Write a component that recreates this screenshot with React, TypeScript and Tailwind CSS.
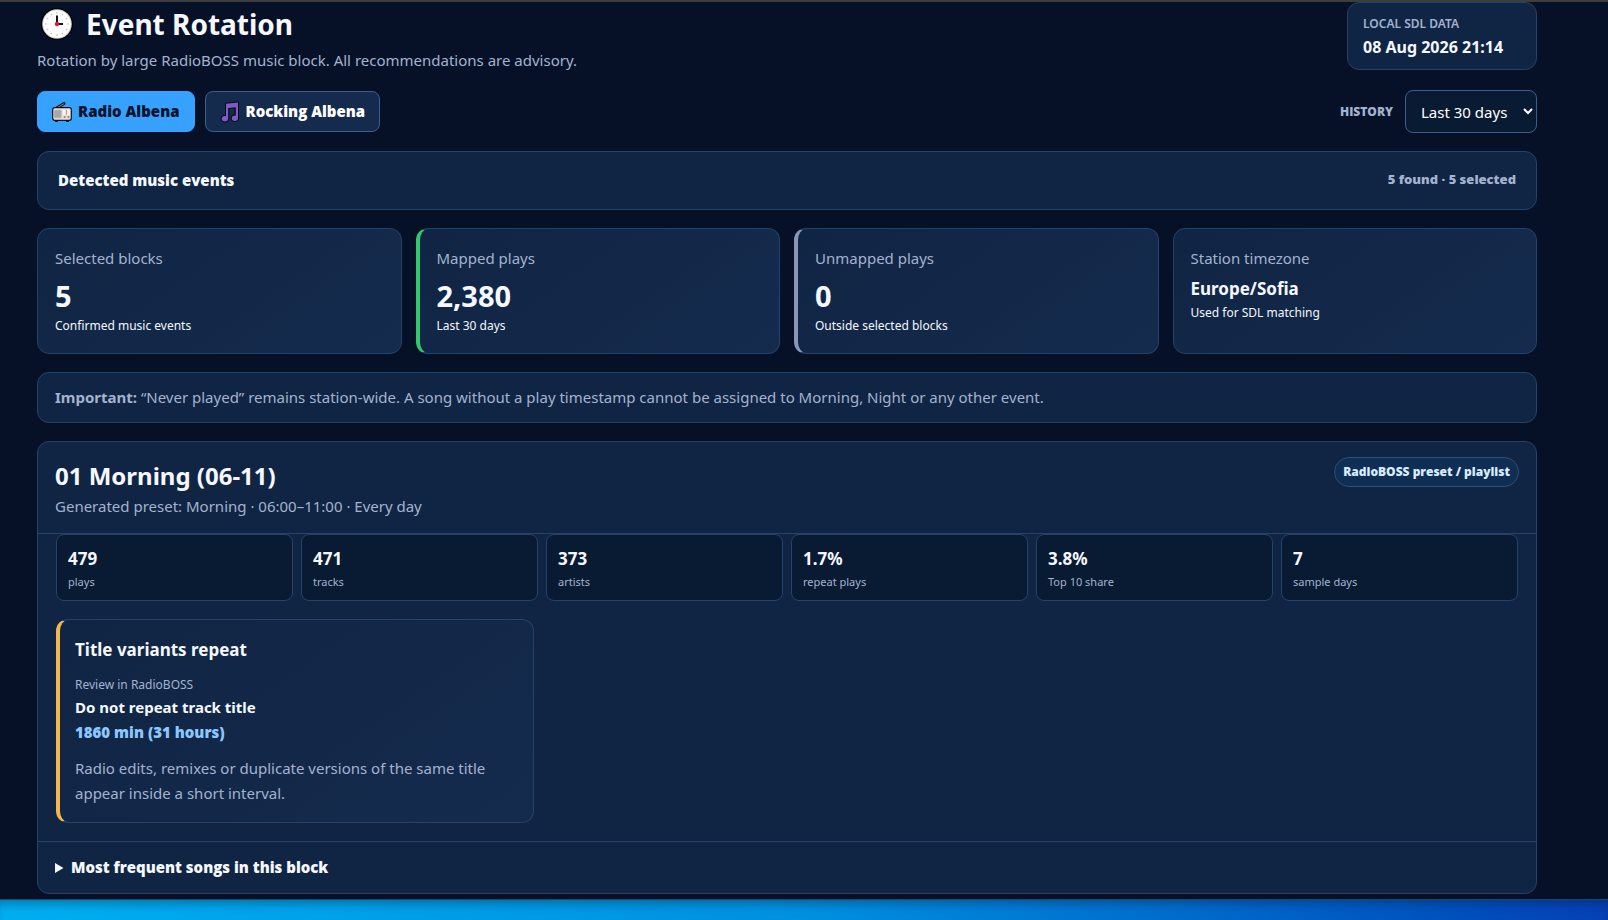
import { useState } from 'react'
import type { ReactNode } from 'react'

type Station = 'albena' | 'rocking'

interface StatCard {
  label: string
  value: string
  note: string
  accent?: string
  small?: boolean
}

const STATS: StatCard[] = [
  { label: 'Selected blocks', value: '5', note: 'Confirmed music events' },
  { label: 'Mapped plays', value: '2,380', note: 'Last 30 days', accent: 'border-l-4 border-l-[#32c671]' },
  { label: 'Unmapped plays', value: '0', note: 'Outside selected blocks', accent: 'border-l-4 border-l-[#8998b0]' },
  { label: 'Station timezone', value: 'Europe/Sofia', note: 'Used for SDL matching', small: true },
]

const METRICS = [
  { value: '479', label: 'plays' },
  { value: '471', label: 'tracks' },
  { value: '373', label: 'artists' },
  { value: '1.7%', label: 'repeat plays' },
  { value: '3.8%', label: 'Top 10 share' },
  { value: '7', label: 'sample days' },
]

// Open Sans goes up to a real 800 weight, Noto Sans is used for the rest
const HEAVY = "font-['Open_Sans','Noto_Sans',sans-serif] font-extrabold "

function ClockIcon() {
  const dots = Array.from({ length: 12 }, (_, i) => (i * Math.PI) / 6)
  return (
    <svg width="32" height="32" viewBox="0 0 32 32" aria-hidden="true" className="shrink-0">
      <circle cx="16" cy="16" r="16" fill="#000" />
      <circle cx="16" cy="16" r="14.8" fill="#cfcfcf" />
      <circle cx="16" cy="16" r="13.8" fill="#fff" />
      {dots.map((a) => (
        <circle key={a} cx={16 + 11 * Math.sin(a)} cy={16 - 11 * Math.cos(a)} r="0.8" fill="#b9b9b9" />
      ))}
      <path d="M16 16V7.4M16 16h6" stroke="#111" strokeWidth="2" fill="none" />
      <circle cx="16" cy="16" r="2.2" fill="#f4122b" />
    </svg>
  )
}

function RadioIcon() {
  return (
    <svg width="20" height="22" viewBox="0 0 20 22" aria-hidden="true" className="shrink-0">
      <path d="M4 7.5 12 2.5" stroke="#111" strokeWidth="3" strokeLinecap="round" />
      <path d="M4.5 7.2 11.9 2.7" stroke="#8d8d8d" strokeWidth="1" />
      <rect x="3" y="18" width="3" height="3" rx="0.8" fill="#111" />
      <rect x="14" y="18" width="3" height="3" rx="0.8" fill="#111" />
      <rect x="0.7" y="6.7" width="18.6" height="12.6" rx="2" fill="#e4e2e0" stroke="#111" strokeWidth="1.2" />
      <rect x="2.2" y="8.8" width="7.2" height="8.4" fill="#b4b2b1" />
      <path d="M2.2 11h7.2M2.2 13h7.2M2.2 15h7.2" stroke="#8f8d8c" strokeWidth="0.6" />
      <rect x="11" y="8.8" width="7" height="5" fill="#f8f6f3" />
      <path d="M14.4 8.8v5" stroke="#f2793a" strokeWidth="1" />
      <circle cx="12.7" cy="16" r="1.1" fill="#8a8a8a" />
      <circle cx="16.4" cy="16" r="1.1" fill="#8a8a8a" />
    </svg>
  )
}

function NotesIcon() {
  return (
    <svg width="20" height="22" viewBox="0 0 20 22" aria-hidden="true" className="shrink-0">
      <g stroke="#0b0b14" strokeWidth="2" strokeLinejoin="round">
        <path d="M6 2.8 18 1.6v15.2h-2.6V6.2L8.4 7v10.6H6z" />
        <ellipse cx="4.9" cy="17.8" rx="3.4" ry="2.9" />
        <ellipse cx="14.9" cy="17.2" rx="3.3" ry="2.9" />
      </g>
      <g fill="#7a5bc7">
        <path d="M6 2.8 18 1.6v15.2h-2.2V6.2L8.2 7v10.6H6z" />
        <ellipse cx="4.9" cy="17.8" rx="3.2" ry="2.7" />
        <ellipse cx="14.9" cy="17.2" rx="3.1" ry="2.7" />
      </g>
    </svg>
  )
}

function StationTab({ active, onClick, children }: { active: boolean; onClick: () => void; children: ReactNode }) {
  return (
    <button
      type="button"
      aria-pressed={active}
      onClick={onClick}
      className={
        HEAVY +
        'flex items-center gap-[6px] rounded-lg border px-[14px] py-[7px] ' +
        (active ? 'border-[#37a1ff] bg-[#37a1ff] text-[#04122a]' : 'border-[#3a5f8f] bg-[#152b4e] text-white')
      }
    >
      {children}
    </button>
  )
}

export default function App() {
  const [station, setStation] = useState<Station>('albena')
  const [history, setHistory] = useState('30')

  return (
    <div className="flex min-h-screen flex-col border-t-2 border-[#3d3d3f] bg-[#061128] font-['Noto_Sans','Open_Sans',sans-serif] text-[15px] leading-[25px] text-[#f5f8ff]">
      <main className="flex flex-1 flex-col pr-[71px] pb-[5px] pl-[37px]">
        <header className="flex items-start justify-between">
          <div>
            <h1 className="flex items-center gap-[13px] pt-1 pl-1 text-[28px] leading-9 font-bold">
              <ClockIcon />
              Event Rotation
            </h1>
            <p className="mt-[6px] text-[#a3b3cf]">
              Rotation by large RadioBOSS music block. All recommendations are advisory.
            </p>
          </div>
          <div className="min-w-[190px] rounded-xl border border-[#254369] bg-[#102543] px-[15px] py-[9px]">
            <div className="text-xs leading-[23px] font-semibold text-[#a3b3cf] uppercase">Local SDL data</div>
            <div className="text-base leading-[25px] font-bold">08 Aug 2026 21:14</div>
          </div>
        </header>

        <div className="mt-[17px] flex items-center justify-between">
          <div className="flex gap-[10px]">
            <StationTab active={station === 'albena'} onClick={() => setStation('albena')}>
              <RadioIcon />
              Radio Albena
            </StationTab>
            <StationTab active={station === 'rocking'} onClick={() => setStation('rocking')}>
              <NotesIcon />
              Rocking Albena
            </StationTab>
          </div>
          <div className="flex items-center gap-3">
            <label htmlFor="history" className={HEAVY + 'text-xs text-[#a3b3cf] uppercase'}>
              History
            </label>
            <select
              id="history"
              value={history}
              onChange={(e) => setHistory(e.target.value)}
              className="h-[43px] w-[132px] rounded-lg border border-[#3a5f8f] bg-[#091a33] pl-[11px] text-white"
            >
              <option value="7">Last 7 days</option>
              <option value="30">Last 30 days</option>
              <option value="90">Last 90 days</option>
            </select>
          </div>
        </div>

        <section className="mt-[18px] flex items-start justify-between rounded-xl border border-[#254369] bg-[#102543] px-5 pt-[15px] pb-4">
          <h2 className={HEAVY + 'pt-px'}>Detected music events</h2>
          <span className={HEAVY + 'text-[13px] text-[#a3b3cf]'}>5 found · 5 selected</span>
        </section>

        <section className="mt-[18px] grid grid-cols-4 gap-[14px]">
          {STATS.map((s) => (
            <div
              key={s.label}
              className={
                'rounded-xl border border-[#254369] bg-linear-145 from-[#102543] to-[#152b4e] px-[17px] py-[17px] ' +
                (s.accent ?? '')
              }
            >
              <div className="text-[#a3b3cf]">{s.label}</div>
              <div className={s.small ? 'mt-1 text-[17px] leading-7 font-bold' : 'mt-1 text-[29px] leading-[41px] font-bold'}>
                {s.value}
              </div>
              <div className="text-xs leading-5">{s.note}</div>
            </div>
          ))}
        </section>

        <p className="mt-[18px] rounded-xl border border-[#254369] bg-[#102543] px-[17px] py-3 text-[#a3b3cf]">
          <strong className="font-bold">Important:</strong> “Never played” remains station-wide. A song without a play
          timestamp cannot be assigned to Morning, Night or any other event.
        </p>

        <article className="mt-[18px] rounded-xl border border-[#254369] bg-[#102543]">
          <div className="flex items-start justify-between border-b border-[#254369] px-[17px] pt-[15px] pb-[14px]">
            <div>
              <h2 className="text-2xl leading-[37px] font-bold">01 Morning (06-11)</h2>
              <p className="text-[#a3b3cf]">Generated preset: Morning · 06:00–11:00 · Every day</p>
            </div>
            <span className={HEAVY + 'rounded-full border border-[#2b4f7e] bg-[#102d53] px-2 py-1 text-xs leading-5 text-[#d8ebff]'}>
              RadioBOSS preset / playlist
            </span>
          </div>

          <div className="grid grid-cols-6 gap-2 px-[18px]">
            {METRICS.map((m) => (
              <div key={m.label} className="rounded-lg border border-[#254369] bg-[#091a33] px-[11px] py-[10px]">
                <div className="text-[17px] leading-7 font-bold">{m.value}</div>
                <div className="text-[11px] leading-[17px] text-[#a3b3cf]">{m.label}</div>
              </div>
            ))}
          </div>

          <div className="grid grid-cols-3 gap-[14px] p-[18px]">
            <div className="rounded-xl border border-l-4 border-[#254369] border-l-[#f5b64d] bg-linear-145 from-[#102543] to-[#152b4e] px-[15px] py-4">
              <h3 className="text-[17px] leading-7 font-bold">Title variants repeat</h3>
              <p className="mt-[10px] text-xs leading-[21px] text-[#a3b3cf]">Review in RadioBOSS</p>
              <p className="font-bold">Do not repeat track title</p>
              <p className={HEAVY + 'text-[#8cc8ff]'}>1860 min (31 hours)</p>
              <p className="mt-[11px] text-[#a3b3cf]">
                Radio edits, remixes or duplicate versions of the same title appear inside a short interval.
              </p>
            </div>
          </div>

          <details className="border-t border-[#254369] px-[17px] py-[13px]">
            <summary className={HEAVY + 'cursor-pointer'}>Most frequent songs in this block</summary>
          </details>
        </article>
      </main>
      <div className="h-[21px] border-t border-[#1b4a66] bg-linear-to-r from-[#00aef0] via-[#0090e0] to-[#0640b4] shadow-[inset_0_8px_10px_-4px_rgba(4,30,60,0.35)]" />
    </div>
  )
}
